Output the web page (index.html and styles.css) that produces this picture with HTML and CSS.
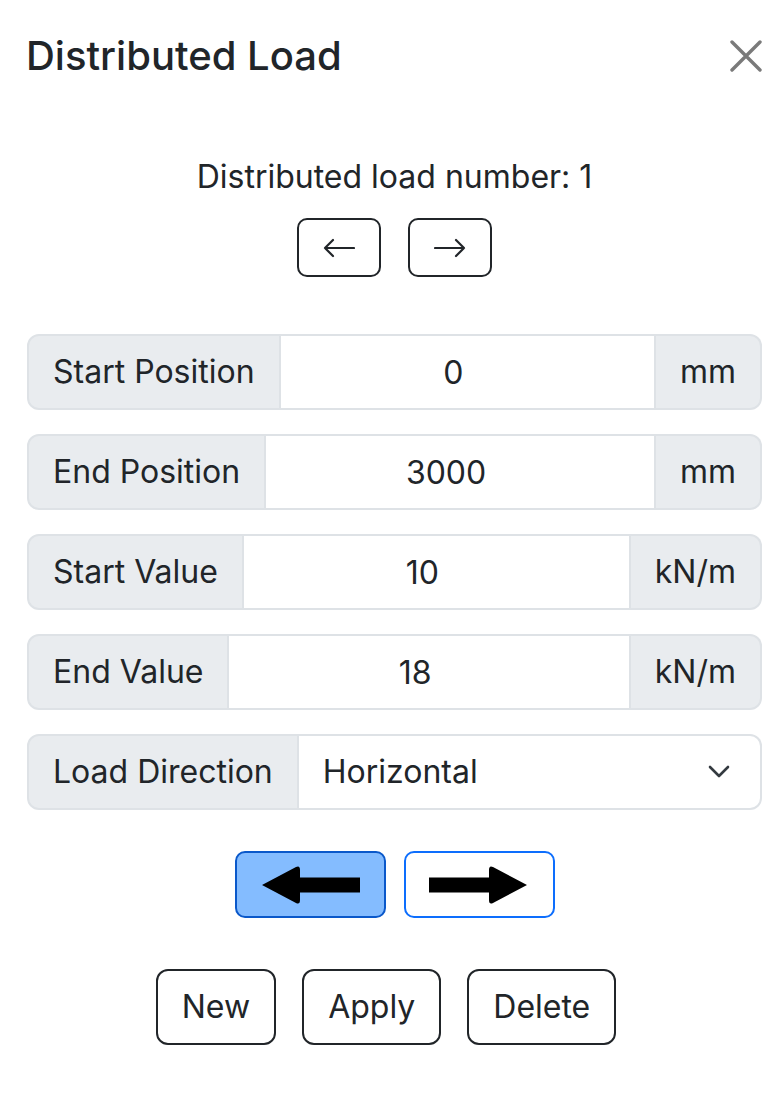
FILE: index.html
```html
<!DOCTYPE html>
<html lang="en">
<head>
    <meta charset="UTF-8">
    <meta name="viewport" content="width=device-width, initial-scale=1.0">
    <title>Distributed Load</title>
    <link rel="stylesheet" href="styles.css">
</head>
<body>
    <div class="modal">
        <!-- Заголовок -->
        <div class="modal-header">
            <h5 class="modal-title">Distributed Load</h5>
            <button class="btn-close" aria-label="Close">
                <svg width="32" height="32" viewBox="0 0 32 32">
                    <path d="M2 2 L30 30 M30 2 L2 30" stroke="#7a7a7a" stroke-width="3.4" stroke-linecap="round"/>
                </svg>
            </button>
        </div>

        <div class="modal-body">
            <p class="load-number">Distributed load number: <span id="loadNum">1</span></p>
            <div class="nav-buttons">
                <button class="btn btn-outline btn-nav" aria-label="Previous">
                    <svg width="32" height="20" viewBox="0 0 32 20">
                        <path d="M31 10 H2 M10 2 L2 10 L10 18" fill="none" stroke="#212529" stroke-width="2.2" stroke-linecap="round" stroke-linejoin="round"/>
                    </svg>
                </button>
                <button class="btn btn-outline btn-nav" aria-label="Next">
                    <svg width="32" height="20" viewBox="0 0 32 20">
                        <path d="M1 10 H30 M22 2 L30 10 L22 18" fill="none" stroke="#212529" stroke-width="2.2" stroke-linecap="round" stroke-linejoin="round"/>
                    </svg>
                </button>
            </div>

            <div class="input-group">
                <span class="input-group-text">Start Position</span>
                <input class="form-control" type="text" value="0">
                <span class="input-group-text">mm</span>
            </div>
            <div class="input-group">
                <span class="input-group-text">End Position</span>
                <input class="form-control" type="text" value="3000">
                <span class="input-group-text">mm</span>
            </div>
            <div class="input-group">
                <span class="input-group-text">Start Value</span>
                <input class="form-control" type="text" value="10">
                <span class="input-group-text">kN/m</span>
            </div>
            <div class="input-group">
                <span class="input-group-text">End Value</span>
                <input class="form-control" type="text" value="18">
                <span class="input-group-text">kN/m</span>
            </div>
            <div class="input-group">
                <span class="input-group-text">Load Direction</span>
                <div class="form-select">
                    <span>Horizontal</span>
                    <svg width="22" height="14" viewBox="0 0 22 14">
                        <path d="M2 2 L11 11 L20 2" fill="none" stroke="#343a40" stroke-width="2.6" stroke-linecap="round" stroke-linejoin="round"/>
                    </svg>
                </div>
            </div>

            <!-- Направление нагрузки -->
            <div class="direction-buttons">
                <button class="btn btn-dir active">
                    <svg width="100" height="42" viewBox="0 0 100 42">
                        <path d="M2 21 L36 3 Q40 1 40 6 L40 13.5 L100 13.5 L100 28.5 L40 28.5 L40 36 Q40 41 36 39 Z" fill="#000"/>
                    </svg>
                </button>
                <button class="btn btn-dir">
                    <svg width="100" height="42" viewBox="0 0 100 42">
                        <path d="M98 21 L64 3 Q60 1 60 6 L60 13.5 L0 13.5 L0 28.5 L60 28.5 L60 36 Q60 41 64 39 Z" fill="#000"/>
                    </svg>
                </button>
            </div>

            <div class="action-buttons">
                <button class="btn btn-outline">New</button>
                <button class="btn btn-outline">Apply</button>
                <button class="btn btn-outline">Delete</button>
            </div>
        </div>
    </div>
</body>
</html>
```

FILE: styles.css
```css
* {
    margin: 0;
    padding: 0;
    box-sizing: border-box;
    font-family: 'Inter', 'Noto Sans', sans-serif;
}

body {
    background: #fff;
    color: #212529;
    font-size: 32px;
    line-height: 1.5;
}

.modal {
    width: 784px;
    padding: 0 22px 0 27px;
}

/* Заголовок */
.modal-header {
    display: flex;
    align-items: flex-start;
    justify-content: space-between;
    padding-top: 32px;
    height: 112px;
}

.modal-title {
    font-size: 40px;
    font-weight: 500;
    line-height: 48px;
    margin-left: -1px;
}

.btn-close {
    background: none;
    border: none;
    width: 34px;
    height: 48px;
    display: flex;
    align-items: center;
    justify-content: flex-end;
    cursor: pointer;
}

.modal-body {
    padding-top: 41px;
}

.load-number {
    text-align: center;
    line-height: 48px;
}

.nav-buttons {
    display: flex;
    justify-content: center;
    gap: 27px;
    margin-top: 17px;
    margin-bottom: 57px;
}

.btn {
    background: #fff;
    border: 2px solid #212529;
    border-radius: 12px;
    color: #212529;
    font-size: 32px;
    line-height: 48px;
    padding: 12px 24px;
    cursor: pointer;
}

.btn-nav {
    width: 84px;
    height: 59px;
    padding: 0;
    display: flex;
    align-items: center;
    justify-content: center;
    border-radius: 10px;
}

/* Поля ввода */
.input-group {
    display: flex;
    height: 76px;
    margin-bottom: 24px;
}

.input-group-text {
    display: flex;
    align-items: center;
    padding: 0 24px;
    background: #e9ecef;
    border: 2px solid #dee2e6;
    white-space: nowrap;
}

.input-group-text:first-child {
    border-radius: 12px 0 0 12px;
}

.input-group-text:last-child {
    border-radius: 0 12px 12px 0;
    border-left: none;
}

.form-control {
    flex: 1;
    min-width: 0;
    border: 2px solid #dee2e6;
    border-left: none;
    padding: 0 28px 0 0;
    font-size: 32px;
    color: #212529;
    text-align: center;
    outline: none;
}

.form-select {
    flex: 1;
    display: flex;
    align-items: center;
    justify-content: space-between;
    padding: 0 30px 0 24px;
    border: 2px solid #dee2e6;
    border-left: none;
    border-radius: 0 12px 12px 0;
}

/* Кнопки направления */
.direction-buttons {
    display: flex;
    justify-content: center;
    gap: 18px;
    margin-top: 41px;
    margin-bottom: 51px;
}

.btn-dir {
    width: 151px;
    height: 67px;
    padding: 0;
    display: flex;
    align-items: center;
    justify-content: center;
    border-color: #0d6efd;
    border-radius: 10px;
}

.btn-dir.active {
    background: #84bcff;
    border-color: #0a58ca;
}

.action-buttons {
    display: flex;
    justify-content: center;
    gap: 26px;
    padding-right: 17px;
}

.action-buttons .btn {
    height: 76px;
}
```
